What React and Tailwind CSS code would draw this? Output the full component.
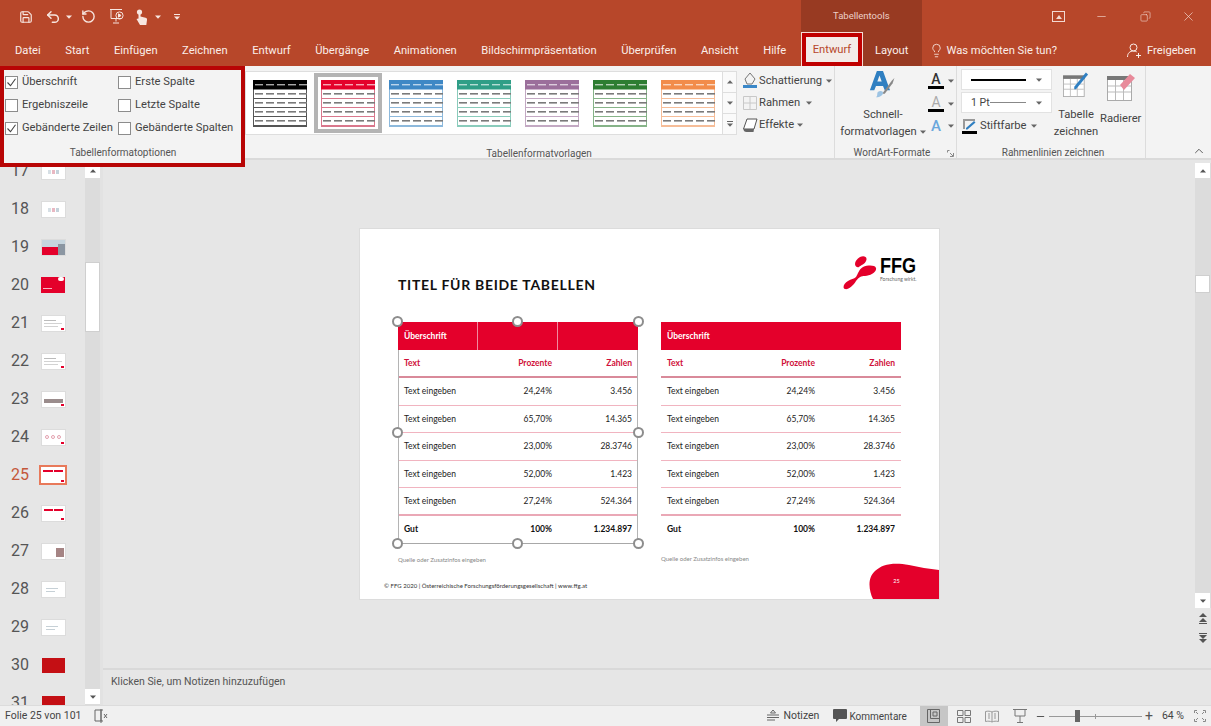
import React from 'react';
import { Save, Undo2, RotateCw, Lightbulb, X, Minus, Copy, ChevronUp } from 'lucide-react';

const TABS = ['Datei', 'Start', 'Einfügen', 'Zeichnen', 'Entwurf', 'Übergänge', 'Animationen', 'Bildschirmpräsentation', 'Überprüfen', 'Ansicht', 'Hilfe'];

const RED = '#e4002b';

const SWATCHES = [
  { head: '#000000', line: '#555555' },
  { head: '#e4002b', line: '#d9778c', selected: true },
  { head: '#3f88c5', line: '#8db9dc' },
  { head: '#2f9e87', line: '#8accbc' },
  { head: '#9b6f9b', line: '#c3a9c3' },
  { head: '#2e7d32', line: '#86b388' },
  { head: '#f28c4b', line: '#f6bd98' },
];

const ROWS = [
  ['Text eingeben', '24,24%', '3.456'],
  ['Text eingeben', '65,70%', '14.365'],
  ['Text eingeben', '23,00%', '28.3746'],
  ['Text eingeben', '52,00%', '1.423'],
  ['Text eingeben', '27,24%', '524.364'],
];

const SLIDES = [
  { n: 17, kind: 'chart' },
  { n: 18, kind: 'chart' },
  { n: 19, kind: 'photo' },
  { n: 20, kind: 'cover' },
  { n: 21, kind: 'text' },
  { n: 22, kind: 'text' },
  { n: 23, kind: 'bars' },
  { n: 24, kind: 'dots' },
  { n: 25, kind: 'table', active: true },
  { n: 26, kind: 'table' },
  { n: 27, kind: 'mixed' },
  { n: 28, kind: 'plain' },
  { n: 29, kind: 'plain' },
  { n: 30, kind: 'dark' },
  { n: 31, kind: 'dark' },
];

function Caret({ className = '' }) {
  return (
    <svg width="6" height="4" viewBox="0 0 6 4" className={className}>
      <path d="M0 0.5h6L3 3.8z" fill="currentColor" />
    </svg>
  );
}

function Swatch({ head, line, selected }) {
  const ys = [12, 21, 30, 39];
  const xs = [2, 13, 24, 35, 46];
  return (
    <div className={selected ? 'flex h-[60px] w-[68px] items-center justify-center border-[4px] border-[#b4b4b4] bg-white' : 'flex h-[60px] w-[68px] items-center justify-center'}>
      <svg width="54" height="47" viewBox="0 0 54 47">
        <rect x="0.5" y="0.5" width="53" height="46" fill="#fff" stroke={line} />
        <rect x="0" y="0" width="54" height="9.5" fill={head} />
        {xs.map((x) => (
          <rect key={x} x={x} y="4" width="8" height="1.4" fill="#fff" opacity="0.65" />
        ))}
        {ys.map((y) => (
          <g key={y}>
            {xs.map((x) => (
              <rect key={x} x={x} y={y + 1} width="8" height="1.6" fill="#7a7a7a" />
            ))}
            <rect x="0" y={y + 6} width="54" height="1" fill={line} />
          </g>
        ))}
      </svg>
    </div>
  );
}

function Check({ checked, label }) {
  return (
    <div className="flex h-[23px] items-center">
      <div className="mr-[4px] flex h-[13px] w-[13px] shrink-0 items-center justify-center border border-[#8c8c8c] bg-white">
        {checked && (
          <svg width="11" height="11" viewBox="0 0 11 11">
            <path d="M1.5 5.500l3 3.200 5-7" fill="none" stroke="#444" strokeWidth="1.1" />
          </svg>
        )}
      </div>
      <span className="whitespace-nowrap text-[11.2px] text-[#444]">{label}</span>
    </div>
  );
}

function GroupLabel({ children, className = '' }) {
  return <div className={`text-center text-[10px] leading-[14px] text-[#555] ${className}`}>{children}</div>;
}

function Thumb({ kind, active }) {
  const base = active
    ? 'relative h-[20px] w-[28px] overflow-hidden border-2 border-[#e8795a] bg-white'
    : 'relative h-[17px] w-[25px] overflow-hidden border border-[#dcdcdc] bg-white';
  if (kind === 'cover') {
    return (
      <div className="relative h-[16px] w-[24px] bg-[#e4002b]">
        <div className="absolute right-[1px] top-0 h-[4px] w-[6px] rounded-full bg-white" />
        <div className="absolute bottom-[4px] left-[2px] h-[1px] w-[9px] bg-[#f6b5c3]" />
      </div>
    );
  }
  if (kind === 'dark') return <div className="h-[15px] w-[23px] bg-[#c40f14]" />;
  return (
    <div className={base}>
      {kind === 'photo' && (
        <>
          <div className="h-[7px] bg-[#c6d5de]" />
          <div className="h-[8px] w-[17px] bg-[#e4002b]" />
          <div className="absolute bottom-0 right-0 h-[11px] w-[7px] bg-[#8b96a2]" />
        </>
      )}
      {kind === 'chart' && (
        <div className="flex justify-center gap-[1px] pt-[6px]">
          <div className="h-[4px] w-[3px] bg-[#d6dfe5]" />
          <div className="h-[4px] w-[3px] bg-[#e9b8c2]" />
          <div className="h-[4px] w-[3px] bg-[#c4d2db]" />
        </div>
      )}
      {kind === 'text' && (
        <div className="flex flex-col gap-[2px] px-[2px] pt-[4px]">
          <div className="h-[1px] w-[12px] bg-[#bbb]" />
          <div className="h-[1px] w-[18px] bg-[#d2d2d2]" />
          <div className="h-[1px] w-[14px] bg-[#d2d2d2]" />
        </div>
      )}
      {kind === 'bars' && <div className="mx-[2px] mt-[7px] h-[4px] bg-[#9a8c8c]" />}
      {kind === 'dots' && (
        <div className="flex justify-center gap-[2px] pt-[5px]">
          <div className="h-[4px] w-[4px] rounded-full border border-[#e3a0ae]" />
          <div className="h-[4px] w-[4px] rounded-full border border-[#e3a0ae]" />
          <div className="h-[4px] w-[4px] rounded-full border border-[#e3a0ae]" />
        </div>
      )}
      {kind === 'table' && (
        <div className="flex gap-[1px] px-[2px] pt-[3px]">
          <div className="h-[2px] flex-1 bg-[#e4002b]" />
          <div className="h-[2px] flex-1 bg-[#e4002b]" />
        </div>
      )}
      {kind === 'mixed' && <div className="ml-[14px] mt-[4px] h-[9px] w-[8px] bg-[#a58484]" />}
      {kind === 'plain' && (
        <div className="flex flex-col gap-[2px] px-[4px] pt-[6px]">
          <div className="h-[1px] w-[12px] bg-[#c6d0d6]" />
          <div className="h-[1px] w-[9px] bg-[#c6d0d6]" />
        </div>
      )}
      {(kind === 'text' || kind === 'bars' || kind === 'dots' || kind === 'table') && <div className="absolute bottom-[1px] right-[1px] h-[2px] w-[3px] bg-[#e4002b]" />}
    </div>
  );
}

function Handle({ className }) {
  return <div className={`absolute h-[11px] w-[11px] rounded-full border-2 border-[#8d8d8d] bg-white ${className}`} />;
}

function SlideTable({ selected }) {
  const pad = selected ? 'pl-[5px] pr-[5px]' : 'px-[6px]';
  return (
    <div className={selected ? 'relative w-[240px] border-b border-[#a8a8a8]' : 'relative w-[240px]'}>
      <div className="grid h-[28px] grid-cols-3 items-center bg-[#e4002b] text-[8.5px] font-bold text-white">
        <div className={selected ? 'flex h-full items-center border-r border-[#f08aa0] px-[6px]' : 'flex h-full items-center px-[6px]'}>Überschrift</div>
        <div className={selected ? 'h-full border-r border-[#f08aa0]' : 'h-full'} />
        <div />
      </div>
      <div className={selected ? 'border-x border-[#b4b4b4]' : ''}>
        <div className={`grid h-[28px] grid-cols-3 items-center border-b-2 border-[#d98a9a] pt-[1px] text-[8.5px] font-bold text-[#d0103a] ${pad}`}>
          <div>Text</div>
          <div className="pr-[4px] text-right">Prozente</div>
          <div className="text-right">Zahlen</div>
        </div>
        {ROWS.map((r, i) => (
          <div key={i} className={i === 4 ? `grid h-[27.5px] grid-cols-3 items-center border-b-2 border-[#eaa8b6] pt-[1px] text-[8.5px] text-[#222] ${pad}` : `grid h-[27.5px] grid-cols-3 items-center border-b border-[#f1b4c0] pt-[1px] text-[8.5px] text-[#222] ${pad}`}>
            <div>{r[0]}</div>
            <div className="pr-[4px] text-right">{r[1]}</div>
            <div className="text-right">{r[2]}</div>
          </div>
        ))}
        <div className={`grid h-[27px] grid-cols-3 items-center pt-[1px] text-[8.5px] font-bold text-[#111] ${pad}`}>
          <div>Gut</div>
          <div className="pr-[4px] text-right">100%</div>
          <div className="text-right">1.234.897</div>
        </div>
      </div>
      {selected && (
        <>
          <Handle className="left-[-6px] top-[-6px]" />
          <Handle className="left-[114px] top-[-6px]" />
          <Handle className="right-[-6px] top-[-6px]" />
          <Handle className="left-[-6px] top-[105px]" />
          <Handle className="right-[-6px] top-[105px]" />
          <Handle className="bottom-[-6px] left-[-6px]" />
          <Handle className="bottom-[-6px] left-[114px]" />
          <Handle className="bottom-[-6px] right-[-6px]" />
        </>
      )}
    </div>
  );
}

function ScrollButton({ down }) {
  return (
    <div className="flex h-[15px] w-[15px] items-center justify-center bg-white text-[#555]">
      <Caret className={down ? '' : 'rotate-180'} />
    </div>
  );
}

export default function App() {
  return (
    <div className="flex h-[726px] w-[1211px] flex-col overflow-hidden bg-[#e6e6e6] font-['Roboto','Noto_Sans',sans-serif] text-[#444]">
      {/* title bar + tabs */}
      <div className="relative h-[66px] shrink-0 bg-[#b7472a] text-white">
        <div className="absolute bottom-0 left-[801px] top-0 w-[121px] bg-[#983a22]" />
        <div className="relative flex h-[33px] items-center">
          <div className="flex items-center pl-[19px] text-[#f7e6e0]">
            <Save size={14} strokeWidth={2} />
            <Undo2 size={16} strokeWidth={2.2} className="ml-[12px]" />
            <Caret className="ml-[5px]" />
            <RotateCw size={15} strokeWidth={2.2} className="ml-[9px] -scale-x-100" />
            <svg width="16" height="17" viewBox="0 0 16 17" className="ml-[13px]" fill="none" stroke="currentColor" strokeWidth="1">
              <path d="M1 1.500h12M2 1.500v9h10M7 10.500v3M4 15h6" />
              <circle cx="10.5" cy="7.500" r="3.600" />
              <path d="M9.500 5.800v3.400l2.600-1.700z" fill="currentColor" />
            </svg>
            <svg width="13" height="16" viewBox="0 0 13 16" className="ml-[10px]" fill="currentColor">
              <circle cx="4.500" cy="3" r="2.600" />
              <path d="M3.500 3.500h2v4l5 1.200c1.200.3 1.700 1 1.500 2.300l-.7 5H5L1.500 10l1.800-.5.2.2z" />
            </svg>
            <Caret className="ml-[7px]" />
            <div className="ml-[13px] flex flex-col items-center gap-[1px]">
              <div className="h-[1px] w-[6px] bg-current" />
              <Caret />
            </div>
          </div>
          <div className="absolute left-[833px] text-[9.5px] text-[#ecd0c8]">Tabellentools</div>
          <div className="absolute left-[1052px] flex h-[11px] w-[13px] items-center justify-center border border-[#f3d9d1]">
            <div className="h-0 w-0 border-x-[3px] border-b-[4px] border-x-transparent border-b-[#f3d9d1]" />
          </div>
          <Minus size={13} strokeWidth={1.2} className="absolute left-[1095px] text-[#f3d9d1]" />
          <Copy size={11} strokeWidth={1.3} className="absolute left-[1140px] -scale-x-100 text-[#f3d9d1]" />
          <X size={15} strokeWidth={1.1} className="absolute left-[1181px] text-[#f3d9d1]" />
        </div>
        <div className="relative flex h-[33px] items-center text-[11.2px] text-[#fbeee9]">
          <div className="flex w-[802px] shrink-0 items-center gap-[24.5px] pl-[15px] pt-[3px]">
            {TABS.map((t) => (
              <span key={t} className="whitespace-nowrap">{t}</span>
            ))}
          </div>
          <div className="flex h-[33px] w-[60px] shrink-0 items-center justify-center border-[4px] border-[#c00000] bg-[#f3ece9] pt-[2px] text-[#b7472a] outline outline-1 outline-[#f6dcd5]">
            Entwurf
          </div>
          <div className="flex flex-1 items-center pt-[3px]">
            <span className="ml-[13px]">Layout</span>
            <Lightbulb size={15} strokeWidth={1.3} className="ml-[21px]" />
            <span className="ml-[2px] whitespace-nowrap">Was möchten Sie tun?</span>
            <div className="flex-1" />
            <svg width="15" height="15" viewBox="0 0 15 15" fill="none" stroke="currentColor">
              <circle cx="6.500" cy="4.500" r="3.500" />
              <path d="M.5 14c0-4 2.500-6 6-6 1.200 0 2.300.3 3.200.8M11.500 10v5M9 12.500h5" />
            </svg>
            <span className="ml-[5px] mr-[15px]">Freigeben</span>
          </div>
        </div>
      </div>

      {/* ribbon */}
      <div className="relative z-10 flex h-[94px] shrink-0 items-start border-b-2 border-[#dadada] bg-[#f3f3f3]">
        <div className="h-[101px] w-[245px] shrink-0 border-[4px] border-[#b80505] bg-[#f3f3f3] pl-[1px] pt-[1px]">
          <div className="grid grid-cols-[113px_1fr]">
            <Check checked label="Überschrift" />
            <Check label="Erste Spalte" />
            <Check label="Ergebniszeile" />
            <Check label="Letzte Spalte" />
            <Check checked label="Gebänderte Zeilen" />
            <Check label="Gebänderte Spalten" />
          </div>
          <GroupLabel className="mt-[6px]">Tabellenformatoptionen</GroupLabel>
        </div>

        <div className="flex h-[92px] w-[590px] shrink-0 flex-col border-r border-[#dcdcdc]">
          <div className="flex h-[70px] pt-[5px]">
            <div className="flex h-[64px] w-[478px] items-center border border-[#dedede] bg-white">
              <div className="flex w-[476px] items-center">
                {SWATCHES.map((s) => (
                  <Swatch key={s.head} {...s} />
                ))}
              </div>
            </div>
            <div className="flex h-[64px] w-[14px] flex-col border-y border-r border-[#dedede] text-[#666]">
              <div className="flex h-[21px] items-center justify-center border-b border-[#dedede] bg-[#fafafa]"><Caret className="rotate-180" /></div>
              <div className="flex h-[21px] items-center justify-center border-b border-[#dedede] bg-[#fafafa]"><Caret /></div>
              <div className="flex flex-1 flex-col items-center justify-center gap-[1px] bg-[#fafafa]">
                <div className="h-[1px] w-[6px] bg-current" />
                <Caret />
              </div>
            </div>
            <div className="-mt-[1px] ml-[5px] flex flex-col text-[11.2px] text-[#444]">
              <div className="flex h-[22px] items-center">
                <svg width="16" height="18" viewBox="0 0 16 18" fill="none">
                  <path d="M8 1l5 6-3 5H5L3 7z" stroke="#777" />
                  <path d="M1 13h14v3H1z" fill="#3a87c8" />
                </svg>
                <span className="ml-[1px] whitespace-nowrap">Schattierung</span>
                <Caret className="ml-[4px] text-[#666]" />
              </div>
              <div className="flex h-[22px] items-center">
                <svg width="16" height="16" viewBox="0 0 16 16" fill="none" stroke="#c8c8c8">
                  <path d="M1.500 1.500h13v13h-13zM8 1.500v13M1.500 8h13" />
                </svg>
                <span className="ml-[1px]">Rahmen</span>
                <Caret className="ml-[6px] text-[#666]" />
              </div>
              <div className="flex h-[22px] items-center">
                <svg width="16" height="15" viewBox="0 0 16 15">
                  <path d="M5 1h10l-3 10H1.500z" fill="#fff" stroke="#555" />
                  <path d="M1.500 11c0 2 1 3 3 3h7l.5-3z" fill="#666" />
                </svg>
                <span className="ml-[1px]">Effekte</span>
                <Caret className="ml-[3px] text-[#666]" />
              </div>
            </div>
          </div>
          <GroupLabel className="mt-[11px] w-[588px]">Tabellenformatvorlagen</GroupLabel>
        </div>

        <div className="relative flex h-[92px] w-[122px] shrink-0 flex-col border-r border-[#dcdcdc]">
          <div className="flex h-[74px]">
            <div className="flex w-[93px] flex-col items-center pl-[3px] pt-[5px]">
              <svg width="30" height="32" viewBox="0 0 30 32">
                <path d="M8 0h7l8 22h-6l-2-5H7l-2 5H0zM8.500 12h5L11 5z" fill="#2f7fc1" />
                <path d="M14 26l11-15 3-3-2 6-9 12z" fill="#888" />
                <path d="M9 24c3-2 6-1 6 1s-3 5-8 5c2-1 1-4 2-6z" fill="#9cc3e3" />
              </svg>
              <div className="mt-[7px] text-[11.2px] leading-[17px]">Schnell-</div>
              <div className="flex items-center whitespace-nowrap text-[11.2px] leading-[17px]">formatvorlagen<Caret className="ml-[3px] text-[#666]" /></div>
            </div>
            <div className="flex flex-col items-start gap-[6px] pt-[6px]">
              <div className="flex items-center">
                <div className="flex w-[16px] flex-col items-center border-b-[3px] border-black text-[14px] font-medium leading-[14px] text-[#333]">A</div>
                <Caret className="ml-[4px] text-[#666]" />
              </div>
              <div className="flex items-center">
                <div className="flex w-[16px] flex-col items-center border-b-[3px] border-black text-[14px] leading-[14px] text-[#aaa]">A</div>
                <Caret className="ml-[4px] text-[#666]" />
              </div>
              <div className="flex items-center">
                <div className="w-[16px] text-center text-[15px] font-medium leading-[16px] text-[#6aa7dc]">A</div>
                <Caret className="ml-[4px] text-[#666]" />
              </div>
            </div>
          </div>
          <div className="mt-[6px] flex items-center">
            <GroupLabel className="w-[108px] pl-[6px]">WordArt-Formate</GroupLabel>
            <svg width="7" height="7" viewBox="0 0 7 7" fill="none" stroke="#888" className="ml-[4px]"><path d="M.5 2.500v-2h2M6.500 3v3.500H3M3 3l3 3" /></svg>
          </div>
        </div>

        <div className="flex h-[92px] w-[189px] shrink-0 flex-col border-r border-[#dcdcdc] pl-[4px]">
          <div className="flex h-[74px]">
            <div className="flex w-[92px] flex-col pt-[3px]">
              <div className="flex h-[21px] w-[91px] items-center border border-[#e2e2e2] bg-white px-[9px]">
                <div className="h-[2px] flex-1 bg-black" />
                <Caret className="ml-[10px] text-[#666]" />
              </div>
              <div className="mt-[2px] flex h-[21px] w-[91px] items-center border border-[#e2e2e2] bg-white px-[9px] text-[10.5px]">
                <span className="whitespace-nowrap">1 Pt</span>
                <div className="h-[1px] flex-1 bg-[#888]" />
                <Caret className="ml-[10px] text-[#666]" />
              </div>
              <div className="mt-[5px] flex items-center">
                <svg width="16" height="16" viewBox="0 0 16 16" className="ml-[1px]">
                  <path d="M1 1h12v2H3v8H1z" fill="#999" />
                  <path d="M4 10l8-7 1.500 1.500-8 7H4z" fill="#2f7fc1" />
                  <rect x="0" y="13" width="15" height="3" fill="#000" />
                </svg>
                <span className="ml-[2px] text-[11.2px]">Stiftfarbe</span>
                <Caret className="ml-[4px] text-[#666]" />
              </div>
            </div>
            <div className="flex w-[46px] flex-col items-center pt-[6px]">
              <svg width="30" height="29" viewBox="0 0 30 29" fill="none">
                <rect x="0.500" y="4.500" width="24" height="24" stroke="#aaa" fill="#fff" />
                <rect x="0" y="4" width="25" height="4" fill="#777" />
                <path d="M1 14h23M1 20h23M8.500 8v20M16.500 8v20" stroke="#bbb" />
                <path d="M13 20l2 0 14-17-2.500-2.500L13 17z" fill="#2f7fc1" />
              </svg>
              <div className="mt-[9px] text-center text-[11.2px] leading-[17px]">Tabelle<br />zeichnen</div>
            </div>
            <div className="flex flex-col items-center pl-[1px] pt-[6px]">
              <svg width="28" height="29" viewBox="0 0 28 29" fill="none">
                <rect x="0.500" y="4.500" width="24" height="24" stroke="#aaa" fill="#fff" />
                <rect x="0" y="4" width="25" height="4" fill="#777" />
                <path d="M1 14h23M1 20h23M8.500 8v20M16.500 8v20" stroke="#bbb" />
                <path d="M13 13l10-11 5 4-11 12z" fill="#e88a9a" />
              </svg>
              <div className="mt-[9px] text-[11.2px] leading-[17px]">Radierer</div>
            </div>
          </div>
          <GroupLabel className="mt-[6px]">Rahmenlinien zeichnen</GroupLabel>
        </div>

        <div className="flex flex-1 items-end justify-end self-stretch pr-[5px] text-[#555]">
          <ChevronUp size={14} strokeWidth={1.6} />
        </div>
      </div>

      {/* main area */}
      <div className="flex min-h-0 flex-1">
        <div className="flex w-[103px] shrink-0 border-r-[3px] border-[#e2e2e2] bg-[#e6e6e6]">
          <div className="w-[85px] shrink-0 overflow-hidden">
            <div className="-mt-[8px]">
              {SLIDES.map((s) => (
                <div key={s.n} className="flex h-[38px] items-center">
                  <span className={s.active ? 'w-[38px] pl-[11px] text-[16px] text-[#c4573a]' : 'w-[38px] pl-[11px] text-[16px] text-[#555]'}>{s.n}</span>
                  <div className="flex w-[30px] justify-center">
                    <Thumb kind={s.kind} active={s.active} />
                  </div>
                </div>
              ))}
            </div>
          </div>
          <div className="flex w-[15px] shrink-0 flex-col bg-[#dcdcdc]">
            <div className="mt-[3px]"><ScrollButton /></div>
            <div className="mt-[84px] h-[70px] w-[15px] border border-[#cfcfcf] bg-white" />
            <div className="mb-[1px] mt-auto"><ScrollButton down /></div>
          </div>
        </div>

        <div className="flex min-w-0 flex-1 flex-col">
          <div className="flex min-h-0 flex-1">
            <div className="flex flex-1 justify-center pl-[2px] pt-[68px]">
              <div className="relative h-[372px] w-[581px] border border-[#dcdcdc] bg-white px-[38px] font-['Lato','Open_Sans',sans-serif]">
                <div className="pt-[46px] text-[14px] font-bold leading-[20px] tracking-[0.7px] text-[#111]">TITEL FÜR BEIDE TABELLEN</div>
                <div className="mt-[27px] flex gap-[23px]">
                  <div>
                    <SlideTable selected />
                    <div className="mt-[11px] text-[6px] text-[#888]">Quelle oder Zusatzinfos eingeben</div>
                  </div>
                  <div>
                    <SlideTable />
                    <div className="mt-[11px] text-[6px] text-[#888]">Quelle oder Zusatzinfos eingeben</div>
                  </div>
                </div>
                <div className="-ml-[14px] mt-[17px] text-[6px] text-[#333]">© FFG 2020 | Österreichische Forschungsförderungsgesellschaft | www.ffg.at</div>

                {/* logo */}
                <div className="absolute left-[483px] top-[27px] flex">
                  <svg width="34" height="35" viewBox="0 0 34 35">
                    <path d="M17 1c4-2 8 0 6 4-1 3-5 4-7 6-2 1-4-1-4-3 0-3 2-5 5-7z" fill={RED} />
                    <path d="M20 11c5-2 12-2 13 1 1 4-6 8-11 8-4 0-6 1-9 5-3 5-8 9-11 8-3-1-1-6 3-8 3-2 6-2 8-4 2-3 3-8 7-10z" fill={RED} />
                  </svg>
                  <div className="ml-[3px] flex w-[38px] flex-col">
                    <div className="origin-left scale-x-[0.82] font-['Liberation_Sans',sans-serif] text-[22px] font-bold leading-[20px] text-black">FFG</div>
                    <div className="whitespace-nowrap text-[5px] leading-[7px] text-[#666]">Forschung wirkt.</div>
                  </div>
                </div>

                {/* page number blob */}
                <div className="absolute bottom-0 right-0 flex h-[36px] w-[70px] items-center justify-center">
                  <svg width="70" height="36" viewBox="0 0 70 36" className="absolute inset-0">
                    <path d="M4 36C0 28-2 15 6 8 13 1 25-1 40 2c10 2 20 4 30 5v29z" fill={RED} />
                  </svg>
                  <span className="relative -ml-[15px] text-[5.500px] text-white">25</span>
                </div>
              </div>
            </div>

            <div className="flex w-[17px] shrink-0 flex-col items-center text-[#555]">
              <div className="mt-[3px] flex h-[445px] w-[16px] flex-col items-center bg-[#dcdcdc]">
                <ScrollButton />
                <div className="mt-[97px] h-[18px] w-[15px] border border-[#cfcfcf] bg-white" />
                <div className="mt-auto"><ScrollButton down /></div>
              </div>
              <svg width="10" height="12" viewBox="0 0 10 12" className="mt-[5px]" fill="currentColor"><path d="M5 0l4 4H1zM5 5l4 4H1zM1 10h8v1H1z" /></svg>
              <svg width="10" height="12" viewBox="0 0 10 12" className="mt-[7px]" fill="currentColor"><path d="M1 1h8v1H1zM1 3h8L5 7zM1 7h8l-4 4z" /></svg>
            </div>
          </div>
          <div className="h-[37px] shrink-0 border-t-2 border-[#d9d9d9] pl-[8px] pt-[4px] text-[10.5px] text-[#555]">
            Klicken Sie, um Notizen hinzuzufügen
          </div>
        </div>
      </div>

      {/* status bar */}
      <div className="flex h-[21px] shrink-0 items-center border-t border-[#dcdcdc] bg-[#f0f0f0] pl-[5px] text-[10.5px] text-[#444]">
        <span className="whitespace-nowrap">Folie 25 von 101</span>
        <svg width="14" height="14" viewBox="0 0 14 14" fill="none" stroke="#666" className="ml-[13px]">
          <path d="M7 1H1v11h6zM7 1h2M7 12h2M7 0v14M10 5l3 4M13 5l-3 4" />
        </svg>
        <div className="flex-1" />
        <svg width="12" height="12" viewBox="0 0 12 12" fill="none" stroke="#666">
          <path d="M6 0l2.500 3h-5zM0 5h12M0 7.500h12M0 10h8" />
        </svg>
        <span className="ml-[4px]">Notizen</span>
        <svg width="14" height="14" viewBox="0 0 14 14" className="ml-[14px]">
          <path d="M1 0h12a1 1 0 0 1 1 1v8a1 1 0 0 1-1 1H6l-3 3v-3H1a1 1 0 0 1-1-1V1a1 1 0 0 1 1-1z" fill="#555" />
        </svg>
        <span className="ml-[2px] text-[10px]">Kommentare</span>
        <div className="ml-[13px] flex h-[20px] w-[28px] items-center justify-center bg-[#c6c6c6]">
          <svg width="13" height="14" viewBox="0 0 13 14" fill="none" stroke="#666"><path d="M.5.500h12v13H.5zM3.500.500v9h9M6 3h4v4H6z" /></svg>
        </div>
        <svg width="14" height="13" viewBox="0 0 14 13" fill="none" stroke="#777" className="ml-[9px]"><path d="M.5.500h5.500v5H.5zM8 .500h5.500v5H8zM.5 7.500h5.500v5H.5zM8 7.500h5.500v5H8z" /></svg>
        <svg width="14" height="13" viewBox="0 0 14 13" fill="none" stroke="#999" className="ml-[14px]"><path d="M7 2c-2-1-4-1-6.500-.5v10c2.500-.5 4.500-.5 6.500.5 2-1 4-1 6.500-.5v-10C11 1 9 1 7 2zM7 2v10M3 4h2M3 6h2M3 8h2M9 4h2M9 6h2M9 8h2" /></svg>
        <svg width="14" height="14" viewBox="0 0 14 14" fill="none" stroke="#777" className="ml-[14px]"><path d="M0 .500h14M2 .500v6.500h10V.500M7 7v4M4 13.500h6M7 11v2.500" /></svg>
        <Minus size={11} strokeWidth={2.5} className="ml-[8px] text-[#555]" />
        <div className="relative ml-[3px] h-[1px] w-[93px] bg-[#999]">
          <div className="absolute left-[26px] top-[-6px] h-[12px] w-[5px] bg-[#666]" />
          <div className="absolute left-[46px] top-[-2px] h-[5px] w-[1px] bg-[#999]" />
        </div>
        <span className="ml-[3px] text-[14px] leading-none text-[#555]">+</span>
        <span className="ml-[9px] whitespace-nowrap">64 %</span>
        <svg width="12" height="12" viewBox="0 0 12 12" fill="none" stroke="#888" className="ml-[10px] mr-[5px]"><path d="M.5 3V.500H3M9 .500h2.500V3M11.500 9v2.500H9M3 11.500H.5V9M4 4l-2-2M8 4l2-2M4 8l-2 2M8 8l2 2" /></svg>
      </div>
    </div>
  );
}
